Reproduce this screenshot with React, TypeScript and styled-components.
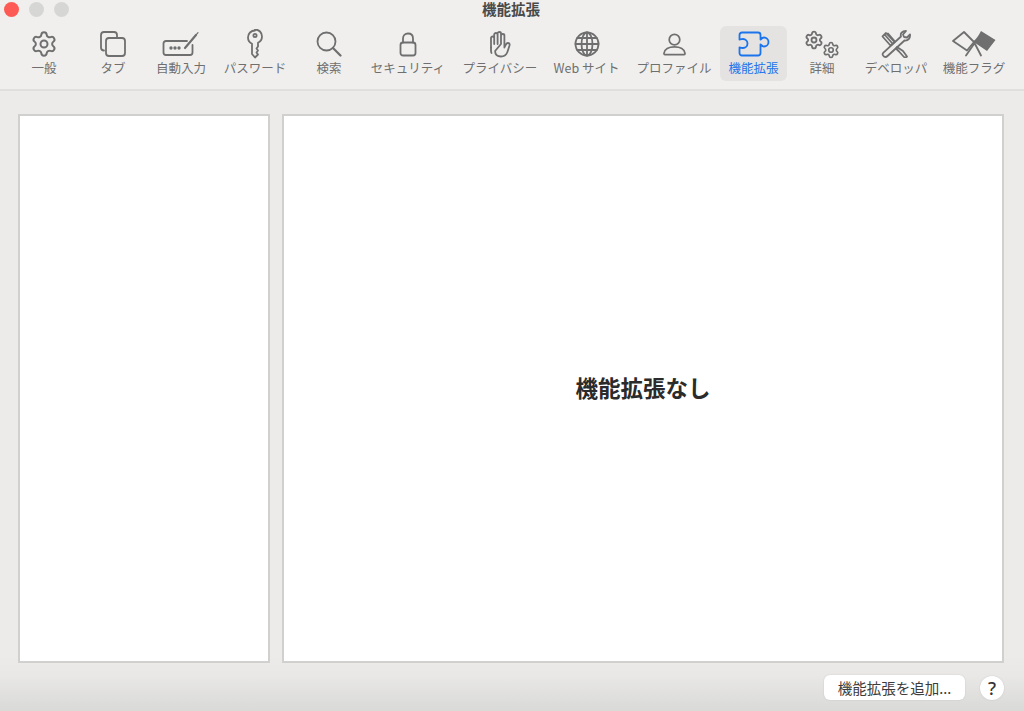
import React from 'react'
import styled, { createGlobalStyle } from 'styled-components'
import { Settings } from 'lucide-react'

const GlobalStyle = createGlobalStyle`
  html, body, #root {
    margin: 0;
    height: 100%;
  }
  body {
    font-family: "Noto Sans CJK JP", "Liberation Sans", sans-serif;
    background: #ecebe9;
    overflow: hidden;
  }
`

const Window = styled.div`
  width: 1024px;
  height: 711px;
  display: flex;
  flex-direction: column;
  background: linear-gradient(to bottom, #ecebe9 0, #ecebe9 655px, #e9e8e6 675px, #d9d9d7 711px);
`

const Toolbar = styled.header`
  height: 91px;
  flex: none;
  box-sizing: border-box;
  background: #f0efee;
  border-bottom: 2px solid #e0dfde;
`

const TitleBar = styled.div`
  height: 26px;
  display: grid;
  grid-template-columns: 1fr auto 1fr;
  align-items: start;
`

const Lights = styled.div`
  display: flex;
  gap: 10px;
  padding: 2px 0 0 4px;
`

const Light = styled.span<{ $color: string }>`
  width: 15px;
  height: 15px;
  border-radius: 50%;
  background: ${p => p.$color};
`

const Title = styled.div`
  font-size: 14.5px;
  line-height: 17px;
  font-weight: 700;
  color: #4a4a4a;
  padding-right: 2px;
`

const Items = styled.nav`
  display: flex;
  padding-left: 11px;
`

const Item = styled.div<{ $w: number; $active?: boolean }>`
  width: ${p => p.$w}px;
  height: 55px;
  flex: none;
  display: flex;
  flex-direction: column;
  align-items: center;
  border-radius: 6px;
  color: ${p => (p.$active ? '#1b74ec' : '#6f6f6f')};
  background: ${p => (p.$active ? '#e4e3e2' : 'transparent')};
`

const IconBox = styled.div`
  height: 34px;
  display: flex;
  align-items: center;
  justify-content: center;
  padding-top: 2px;
  box-sizing: border-box;
`

const Label = styled.span`
  font-size: 12.5px;
  line-height: 16px;
  white-space: nowrap;
`

const Content = styled.main`
  flex: 1;
  display: grid;
  grid-template-columns: 252px 722px;
  gap: 12px;
  padding: 23px 20px 0 18px;
  height: 548px;
  box-sizing: border-box;
`

const Panel = styled.section`
  height: 549px;
  box-sizing: border-box;
  background: #fff;
  border: 2px solid #d0d0ce;
  display: flex;
  align-items: center;
  justify-content: center;
`

const EmptyText = styled.div`
  font-size: 22.5px;
  font-weight: 700;
  color: #2b2b2b;
  padding-bottom: 4px;
`

const Footer = styled.footer`
  display: flex;
  justify-content: flex-end;
  align-items: center;
  gap: 15px;
  padding: 0 20px 11px 0;
`

const AddButton = styled.button`
  width: 141px;
  height: 25px;
  padding: 0;
  border: none;
  border-radius: 6px;
  background: #fff;
  color: #3c3c3c;
  font: 14.5px/25px "Noto Sans CJK JP", sans-serif;
  box-shadow: 0 0 2px rgba(0, 0, 0, 0.12);
`

const HelpButton = styled.button`
  width: 24px;
  height: 24px;
  padding: 0;
  border: none;
  border-radius: 50%;
  background: #fff;
  color: #333;
  font: 500 18px/24px "Noto Sans", sans-serif;
  box-shadow: 0 0 2px rgba(0, 0, 0, 0.12);
`

const Line = styled.svg.attrs({
  fill: 'none',
  stroke: 'currentColor',
  strokeWidth: 1.8,
  strokeLinecap: 'round',
  strokeLinejoin: 'round',
})``

const TabsIcon = () => (
  <Line width="28" height="26" viewBox="0 0 28 26">
    <path d="M5 19.500c-2 0-3-1-3-3V4c0-2 1-3 3-3h10c2 0 3 1 3 3v2" />
    <rect x="7" y="7" width="19" height="18" rx="3" />
  </Line>
)

const AutofillIcon = () => (
  <Line width="38" height="26" viewBox="0 0 38 26">
    <path d="M25 10H4c-1.500 0-2.500 1-2.500 2.500v9c0 1.500 1 2.500 2.500 2.500h24c1.500 0 2.500-1 2.500-2.500V14" />
    <path d="M23 17L34 4" strokeWidth={2.2} />
    <path d="M34.500 3.400l1.500-1.800" strokeWidth={1.2} />
    <circle cx="9" cy="17" r=".8" />
    <circle cx="13" cy="17" r=".8" />
    <circle cx="17" cy="17" r=".8" />
  </Line>
)

const KeyIcon = () => (
  <Line width="18" height="30" viewBox="0 0 18 30">
    <path d="M9 1.500c-4 0-7 3-7 7 0 3 1.600 5 4 6.200V25l3 3.500 3-3-1.500-2 1.500-2-1.500-2 1.500-2v-3.800c2.400-1.200 4-3.200 4-6.200 0-4-3-7-7-7z" />
    <circle cx="9" cy="6.500" r="1.600" />
  </Line>
)

const SearchIcon = () => (
  <Line width="26" height="26" viewBox="0 0 26 26">
    <circle cx="10.500" cy="10.500" r="9" />
    <path d="M17 17l7.500 7.500" strokeWidth={2.2} />
  </Line>
)

const LockIcon = () => (
  <Line width="18" height="25" viewBox="0 0 18 25">
    <rect x="1.500" y="10.500" width="15" height="13" rx="2.500" />
    <path d="M4 10.500V6.500c0-3 2-5 5-5s5 2 5 5v4" />
  </Line>
)

const HandIcon = () => (
  <Line width="23" height="27" viewBox="0 0 23 27" strokeWidth={1.6}>
    <path d="M2 16.500V7c0-2 3.200-2 3.200 0v6M5.200 13V3.500c0-2 3.400-2 3.400 0V13M8.600 13V2.500c0-2 3.400-2 3.400 0V13M12 13V4.500c0-2 3.400-2 3.400 0v12c.8-2 2-4.500 3.500-4.500 1.500 0 2 1.200 1.600 2.500-.9 2.700-1.400 4.800-2.300 7-1.200 2.800-3.200 4-6.200 4-4 0-5.900-2.500-5.900-5.500z" />
    <path d="M2 16.500v3c0 1 .2 1.800.5 2.500" />
  </Line>
)

const GlobeIcon = () => (
  <Line width="26" height="26" viewBox="0 0 26 26" strokeWidth={1.5}>
    <circle cx="13" cy="13" r="11.500" />
    <ellipse cx="13" cy="13" rx="5.500" ry="11.500" />
    <path d="M13 1.500v23M1.500 13h23M3.200 7h19.600M3.200 19h19.600" />
  </Line>
)

const PersonIcon = () => (
  <Line width="23" height="23" viewBox="0 0 24 24" strokeWidth={2}>
    <circle cx="12" cy="7" r="5.500" />
    <path d="M2 22.500c-.5 0-1-.5-1-1.200C1.500 17 6 14.500 12 14.500s10.500 2.500 11 6.800c0 .7-.5 1.200-1 1.200z" />
  </Line>
)

const PuzzleIcon = () => (
  <Line width="32" height="26" viewBox="0 0 32 26" strokeWidth={2.2}>
    <path d="M4 1.500h16c1.500 0 2.500 1 2.500 2.500v4.500c1-1 2-2 3.500-2 2.500 0 4.500 2 4.500 4.500s-2 4.500-4.500 4.500c-1.500 0-2.500-1-3.500-2V22c0 1.500-1 2.500-2.500 2.500H4c-1.500 0-2.500-1-2.500-2.500v-5.500c1.500 0 2.500.5 3.500.5 2.500 0 4.500-2 4.500-4.500S7.500 8 5 8c-1 0-2 .5-3.500.5V4c0-1.500 1-2.500 2.500-2.500z" />
  </Line>
)

const GearsIcon = () => (
  <svg width="36" height="30" viewBox="0 0 36 30">
    <Settings x="0" y="1" width="20" height="20" strokeWidth={2.2} />
    <Settings x="18" y="12" width="18" height="18" strokeWidth={2.2} />
  </svg>
)

const ToolsIcon = () => (
  <Line width="30" height="28" viewBox="0 0 30 28">
    <path d="M3 26.500c-1.500-1-1.800-2.700-.8-3.700L20 6.500c-1-3 1-5.500 5-5.500l-3 3.500 1 2.500 3 .5 3-3c.5 4-2 6.500-5.500 6L6.500 26c-1 1-2.300 1.300-3.500.500z" />
    <path d="M5 3L1.500 6.500l8 9 4-3.500zM4 5l7 8M7 3.500l7 8" />
    <path d="M16 17l6 4 4 5.500c-1 1-2 1-3 .5l-5-5.500-3-3" />
  </Line>
)

const FlagsIcon = () => (
  <Line width="44" height="26" viewBox="0 0 44 26">
    <path d="M1 10L12 1l10 10-7 8.500z" />
    <path d="M22 11l7 13.500M22 13l-8 11.500" />
    <path d="M29 0l14.500 9L35 20 21 10.500c3-2 5-5 8-10.500z" fill="currentColor" stroke="none" />
  </Line>
)

const tabs = [
  { label: '一般', w: 66, icon: <Settings size={28} strokeWidth={1.7} /> },
  { label: 'タブ', w: 72, icon: <TabsIcon /> },
  { label: '自動入力', w: 64, icon: <AutofillIcon /> },
  { label: 'パスワード', w: 84, icon: <KeyIcon /> },
  { label: '検索', w: 64, icon: <SearchIcon /> },
  { label: 'セキュリティ', w: 94, icon: <LockIcon /> },
  { label: 'プライバシー', w: 90, icon: <HandIcon /> },
  { label: 'Web サイト', w: 83, icon: <GlobeIcon /> },
  { label: 'プロファイル', w: 92, icon: <PersonIcon /> },
  { label: '機能拡張', w: 67, icon: <PuzzleIcon />, active: true },
  { label: '詳細', w: 70, icon: <GearsIcon /> },
  { label: 'デベロッパ', w: 78, icon: <ToolsIcon /> },
  { label: '機能フラグ', w: 78, icon: <FlagsIcon /> },
]

export default function App() {
  return (
    <>
      <GlobalStyle />
      <Window>
        <Toolbar>
          <TitleBar>
            <Lights>
              <Light $color="#fd5a55" />
              <Light $color="#d6d6d5" />
              <Light $color="#d6d6d5" />
            </Lights>
            <Title>機能拡張</Title>
          </TitleBar>
          <Items>
            {tabs.map(t => (
              <Item key={t.label} $w={t.w} $active={t.active}>
                <IconBox>{t.icon}</IconBox>
                <Label>{t.label}</Label>
              </Item>
            ))}
          </Items>
        </Toolbar>
        <Content>
          <Panel />
          <Panel>
            <EmptyText>機能拡張なし</EmptyText>
          </Panel>
        </Content>
        <Footer>
          <AddButton>機能拡張を追加...</AddButton>
          <HelpButton>?</HelpButton>
        </Footer>
      </Window>
    </>
  )
}
